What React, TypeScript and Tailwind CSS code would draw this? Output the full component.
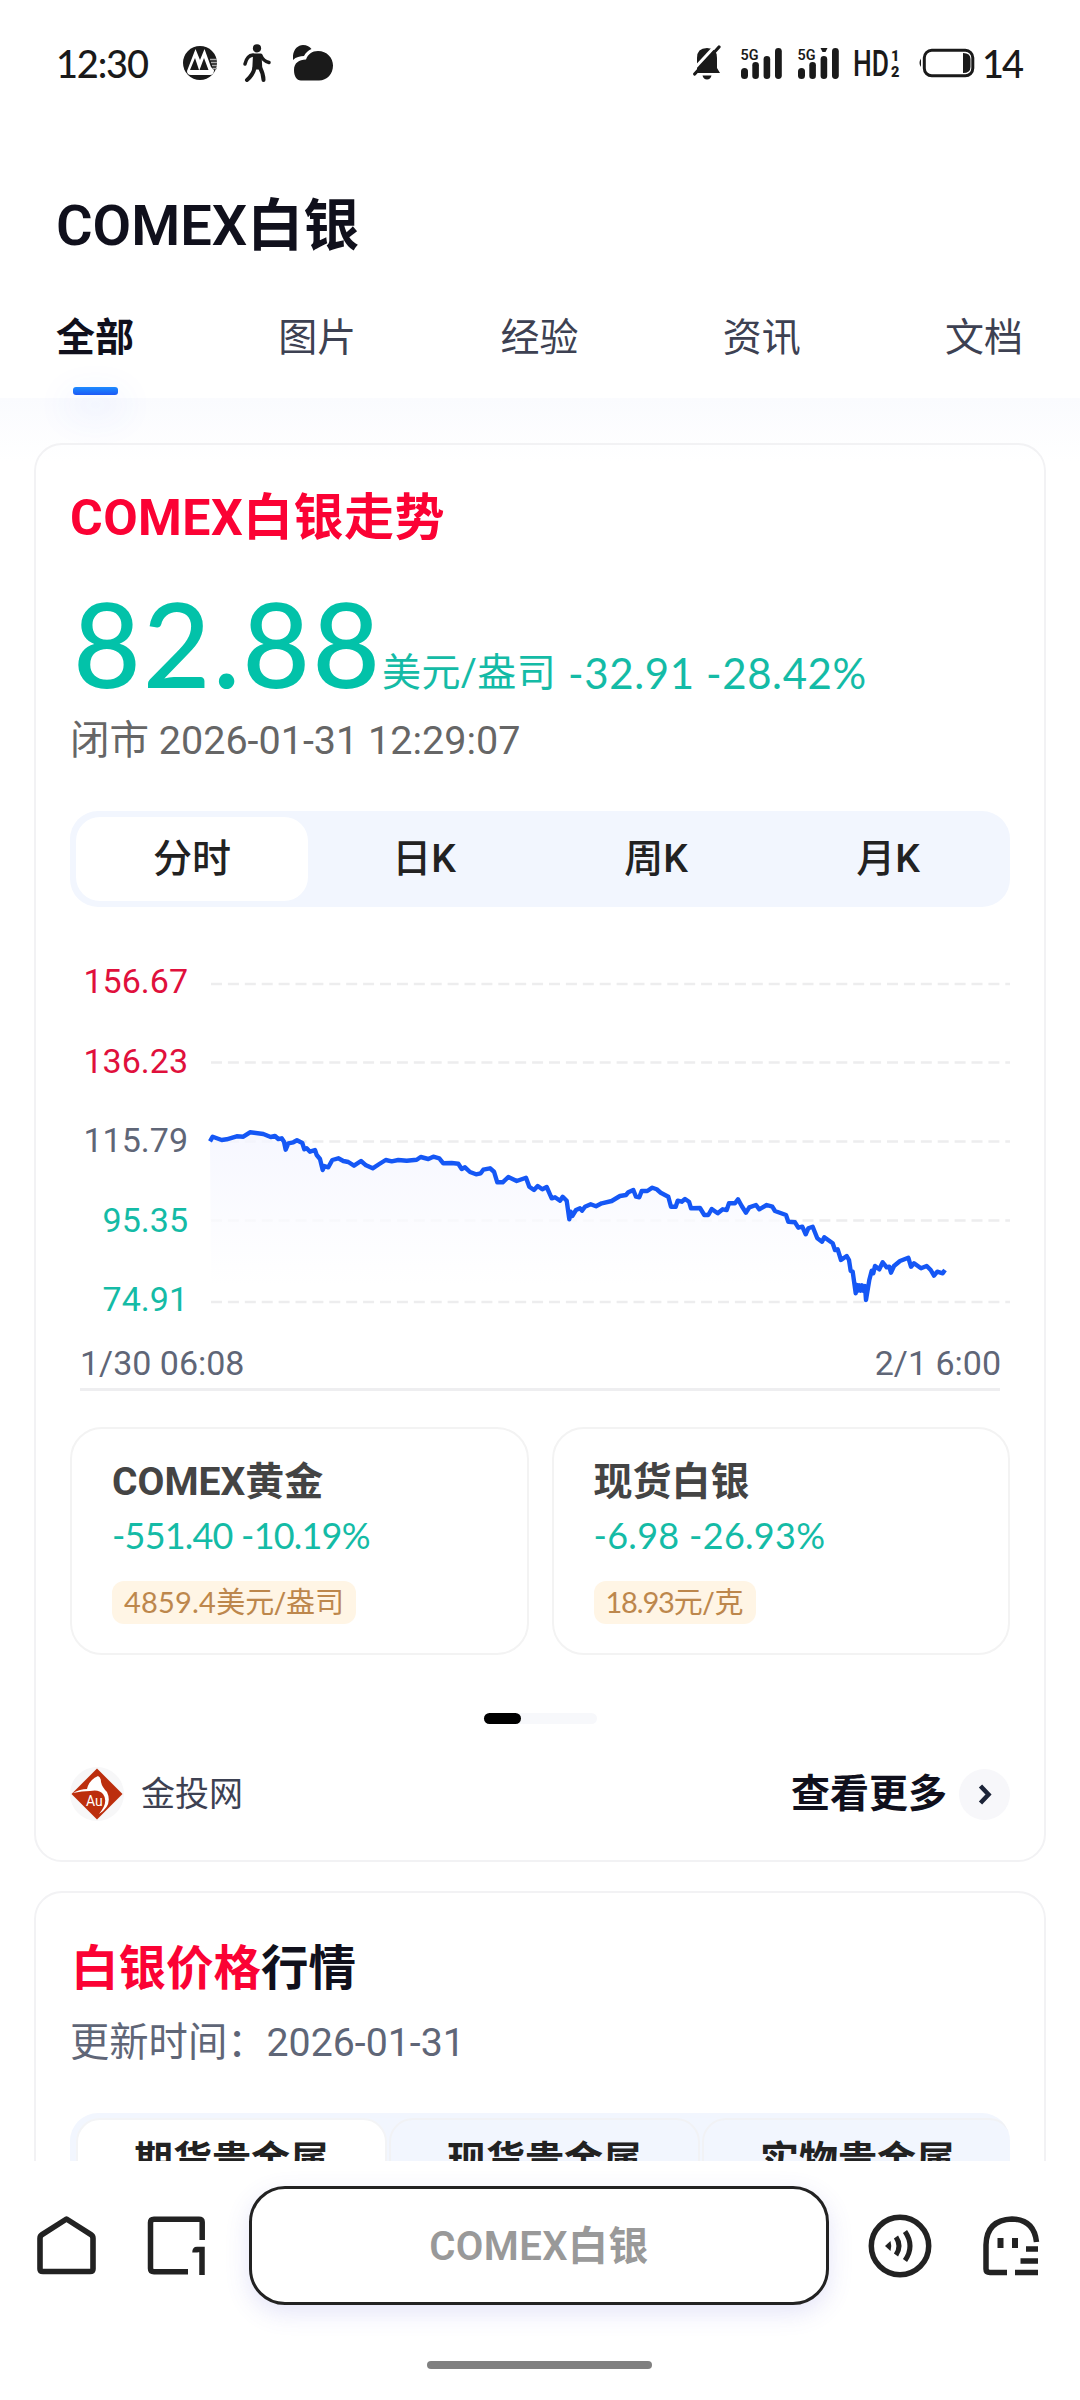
import { useState } from "react";

type Point = [number, number];

// price samples, first and second half of the session
const firstHalf: Point[] = [
  [450, 184], [458, 170], [485, 180], [500, 178], [530, 169], [550, 170], [570, 157], [610, 162],
  [632, 171], [645, 168], [655, 177], [665, 175], [672, 185], [677, 209], [685, 190], [700, 187],
  [711, 181], [727, 189], [733, 208], [740, 205], [750, 215], [765, 210], [770, 225], [780, 237],
  [788, 270], [793, 258], [805, 262], [817, 240], [835, 235], [850, 243], [865, 246], [882, 257],
  [903, 243], [918, 256], [938, 265], [958, 252], [977, 240], [995, 244], [1015, 240], [1040, 242],
  [1070, 239], [1082, 231], [1105, 237], [1120, 230], [1138, 235], [1150, 250], [1175, 249],
  [1195, 251], [1205, 267], [1215, 262], [1230, 276], [1248, 283], [1262, 280], [1270, 269],
  [1290, 265], [1302, 275], [1312, 307], [1328, 307], [1345, 291], [1370, 303], [1398, 293],
  [1408, 320], [1422, 330], [1433, 318], [1447, 328],
];
const secondHalf: Point[] = [
  [20, 321], [35, 355], [45, 352], [60, 362], [68, 350], [80, 362], [88, 418], [92, 395], [97, 408],
  [108, 390], [120, 385], [126, 392], [135, 380], [152, 373], [168, 379], [185, 370], [215, 363],
  [240, 348], [258, 345], [265, 337], [280, 330], [288, 350], [298, 352], [305, 333], [322, 333],
  [337, 323], [350, 328], [362, 338], [385, 350], [393, 380], [407, 380], [413, 362], [425, 365],
  [435, 357], [447, 365], [453, 385], [480, 384], [493, 405], [505, 405], [515, 387], [533, 400],
  [548, 388], [560, 390], [567, 370], [585, 370], [594, 358], [605, 378], [618, 398], [628, 382],
  [648, 375], [658, 388], [680, 375], [697, 380], [705, 393], [738, 405], [745, 425], [765, 427],
  [775, 443], [787, 440], [797, 463], [805, 445], [818, 440], [832, 475], [846, 485], [853, 472],
  [878, 490], [885, 510], [893, 508], [903, 540], [920, 528], [927, 540], [932, 573], [938, 575],
  [947, 640], [950, 615], [954, 632], [958, 616], [962, 632], [966, 616], [970, 632], [975, 618],
  [978, 660], [988, 600], [995, 572], [1000, 580], [1005, 558], [1018, 568], [1028, 547],
  [1040, 562], [1048, 560], [1053, 578], [1062, 558], [1080, 543], [1105, 533], [1113, 560],
  [1122, 550], [1143, 565], [1160, 558], [1172, 570], [1182, 587], [1192, 575], [1208, 580],
  [1215, 570],
];
const line = [...firstHalf, ...secondHalf.map(([x, y]) => [x + 1440, y])]
  .map(([x, y]) => `${((x - 453) / 3).toFixed(1)},${((y + 300) / 3).toFixed(1)}`)
  .join(" ");

const gridLines = [4, 82.5, 161.5, 240.5, 322];

const levels = [
  { value: "156.67", color: "text-[#e0103c]" },
  { value: "136.23", color: "text-[#e0103c]" },
  { value: "115.79", color: "text-[#5f6677]" },
  { value: "95.35", color: "text-[#14bba6]" },
  { value: "74.91", color: "text-[#14bba6]" },
];

const related = [
  {
    name: "COMEX黄金",
    change: "-551.40 -10.19%",
    price: "4859.4",
    unit: "美元/盎司",
    changeClass: "tracking-[-0.8px]",
    priceClass: "tracking-[0.2px]",
  },
  {
    name: "现货白银",
    change: "-6.98 -26.93%",
    price: "18.93",
    unit: "元/克",
    changeClass: "tracking-[0.3px]",
    priceClass: "tracking-[-1.2px]",
  },
];

const SignalIcon = ({ roaming = false }: { roaming?: boolean }) => (
  <svg className="overflow-visible" width="41" height="31" viewBox="0 0 41 31" fill="#1a1a1a">
    <text x="-0.5" y="11.5" fontSize="15" fontWeight="600" fontFamily="Roboto" textLength="18" lengthAdjust="spacingAndGlyphs">
      5G
    </text>
    <rect x="0" y="20" width="7" height="11" rx="3.5" />
    <rect x="11.3" y="14" width="6.6" height="17" rx="3.3" />
    <rect x="22.6" y="8" width="6.6" height="23" rx="3.3" />
    {roaming && <path d="M22.5 0h7l-2 4h-3z" />}
    <rect x="34" y="0" width="6.8" height="31" rx="3.4" />
  </svg>
);

const StatusBar = () => (
  <div className="flex h-[126px] items-center pl-[56px] pr-[58px] text-[#1a1a1a]">
    <span className="w-[127px] font-['Lato',sans-serif] text-[38px] leading-none font-medium tracking-[-1.2px]">12:30</span>
    <svg width="34" height="34" viewBox="0 0 34 34">
      <circle cx="17" cy="17" r="17" fill="#1a1a1a" />
      <path d="M12.5 3 L4 25 Q4 29 8 29 H27 Q31 29 31 24 L28 21 L21.5 3 L17 14Z" fill="#fff" />
      <path d="M7 24 L12 12 L16 24Z M16.5 24 L21 12 L25.5 24Z" fill="#1a1a1a" />
      <path d="M27 13.5h7M28 16.5h6M29 19.5h5M29.5 22.5h4.5" stroke="#aaa" strokeWidth="1.6" />
    </svg>
    <svg className="ml-[26px]" width="28" height="38" viewBox="0 0 28 38" fill="none" stroke="#1a1a1a" strokeLinecap="round" strokeLinejoin="round">
      <circle cx="14" cy="4.3" r="4.1" fill="#1a1a1a" stroke="none" />
      <path d="M11 10.500h6.500l.8 14h-8z" fill="#1a1a1a" strokeWidth="2" />
      <path d="M10 11 Q4 11.5 2 20 M18 11.5 Q20 17 26 18.5" strokeWidth="3.4" />
      <path d="M11.500 24 Q10 31 4 36 M17 23.5 Q20.5 30 20.5 36" strokeWidth="4" />
    </svg>
    <svg className="ml-[22px]" width="41" height="36" viewBox="0 0 41 36" fill="#1a1a1a">
      <path d="M0 15 C-1 6 4 0 10 0 C14 0 17 2 18.500 4 C15 5.500 12.500 8 11 11 C7 11 3 12 0 15Z" />
      <path d="M8 35.500 C3.500 35.500 1 31 1 25 C1 18 6 14.500 13 14.500 C15 9 19 6 25 6 C34 6 40 13 40 20.500 C40 29 34 35.500 26 35.500Z" />
    </svg>
    <div className="ml-auto flex items-center">
      <svg width="28" height="36" viewBox="0 0 28 36">
        <path d="M4 27 V13 Q4 3 14 3 Q24 3 24 13 V23 L27 28 H2Z" fill="#1a1a1a" />
        <path d="M-1 26 L24.500 -1.500" stroke="#fff" strokeWidth="3" />
        <path d="M1.700 29 L26 2" stroke="#1a1a1a" strokeWidth="3.200" strokeLinecap="round" />
        <path d="M9.500 30.500h9q-1 4-4.500 4t-4.500-4z" fill="#1a1a1a" />
      </svg>
      <div className="ml-5 flex gap-4">
        <SignalIcon />
        <SignalIcon roaming />
      </div>
      <svg className="ml-4 overflow-visible" width="46" height="30" viewBox="0 0 46 30" fill="#1a1a1a" fontFamily="Roboto" fontWeight="500">
        <text x="-2" y="28" fontSize="37" textLength="36" lengthAdjust="spacingAndGlyphs">HD</text>
        <text x="36" y="12.500" fontSize="14.500" fontWeight="900">1</text>
        <text x="36" y="29" fontSize="14.500" fontWeight="900">2</text>
      </svg>
      <svg className="ml-[17px]" width="57" height="30" viewBox="0 0 57 30">
        <path d="M3 10.500 Q0 15 3 19Z" fill="#1a1a1a" />
        <rect x="6.300" y="2.300" width="48.500" height="25.500" rx="7.500" fill="none" stroke="#1a1a1a" strokeWidth="3" />
        <path d="M45 5 Q52.500 5 52.500 11 V19 Q52.500 25 45 25Z" fill="#1a1a1a" />
      </svg>
      <span className="ml-[7px] font-['Lato',sans-serif] text-[38px] leading-none font-medium tracking-[-2px]">14</span>
    </div>
  </div>
);

const PriceChart = () => (
  <div className="mt-[54px]">
    <div className="flex">
      <div className="flex h-[358px] w-[118px] flex-col justify-between text-right text-[34px] leading-[40px]">
        {levels.map((level) => (
          <span key={level.value} className={level.color}>
            {level.value}
          </span>
        ))}
      </div>
      <svg className="ml-[23px] mt-[19px] overflow-visible" width="799" height="330" viewBox="0 0 799 330">
        <defs>
          <linearGradient id="area" x1="0" y1="150" x2="0" y2="305" gradientUnits="userSpaceOnUse">
            <stop offset="0" stopColor="#f4f5ff" stopOpacity="0.8" />
            <stop offset="1" stopColor="#ffffff" stopOpacity="0.8" />
          </linearGradient>
        </defs>
        {gridLines.map((y) => (
          <line key={y} x1="0" x2="799" y1={y} y2={y} stroke="#ededee" strokeWidth="2.5" strokeDasharray="11 5.9" />
        ))}
        <polygon points={`0,305 ${line} 738,305`} fill="url(#area)" />
        <polyline points={line} fill="none" stroke="#1557f5" strokeWidth="4.400" strokeLinejoin="round" />
      </svg>
    </div>
    <div className="mx-2.5 -mt-0.5 mb-9 flex h-[74px] items-end justify-between border-b-[3px] border-[#eeeef0] pb-[5px] text-[34px] leading-[40px] text-[#5f6677]">
      <span>1/30 06:08</span>
      <span className="-mr-px">2/1 6:00</span>
    </div>
  </div>
);

const BottomBar = () => (
  <div className="relative flex h-[239px] flex-col items-center bg-white pt-[25px]">
    <div className="flex w-full items-center pl-[37px]">
      <svg width="59" height="59" viewBox="0 0 59 59" fill="none" stroke="#222" strokeWidth="5.600" strokeLinejoin="round">
        <path d="M3 22.500 Q3 20 5 18.700 L29.500 3 L54 18.700 Q56 20 56 22.500 V53 Q56 55.500 53 55.500 H6 Q3 55.500 3 53Z" />
      </svg>
      <svg className="ml-[51px]" width="59" height="59" viewBox="0 0 59 59" fill="none" stroke="#222" strokeWidth="5.500">
        <path d="M55.200 24 V6 Q55.200 3.200 52 3.200 H7 Q3.500 3.200 3.500 6.500 V52.500 Q3.500 55.700 7 55.700 H41" />
        <path d="M55 59 V33.500 H50 Q48 33.500 48 36.500" />
      </svg>
      <div className="ml-[43px] flex h-[119px] w-[580px] items-center justify-center rounded-[36px] border-[3px] border-[#222] bg-white pt-0.5 text-[40px] font-semibold tracking-[0.4px] text-[#999] shadow-[0_8px_24px_rgba(90,90,210,0.16)]">
        COMEX白银
      </div>
      <svg className="ml-[39px]" width="64" height="64" viewBox="0 0 64 64" fill="none" stroke="#222" strokeWidth="5.500">
        <circle cx="32" cy="32" r="28.700" />
        <path d="M17 32 L22.500 27 Q24 32 22.500 37Z" fill="#222" stroke="none" />
        <path d="M28 23 Q34 32 28 41" strokeWidth="5" />
        <path d="M37 17.500 Q47 32 37 46.500" strokeWidth="5" />
      </svg>
      <svg className="ml-[51px]" width="57" height="60" viewBox="0 0 57 60" fill="none" stroke="#222" strokeWidth="5.500">
        <path d="M53.500 26 Q51 3.500 29 3 Q3.500 4 3 29 V53 Q3 56.500 7 56.500 H24" />
        <path d="M17.500 22v10M32 22v10" strokeWidth="6" />
        <path d="M43 33h12M37.500 45h17.500M32 56.500h23" />
      </svg>
    </div>
    <div className="mt-14 mr-px h-2 w-[225px] rounded-full bg-[#808080]" />
  </div>
);

const App = () => {
  const [tab, setTab] = useState("全部");
  const [period, setPeriod] = useState("分时");
  const [metal, setMetal] = useState("期货贵金属");

  return (
    <div className="flex h-[2400px] w-[1080px] flex-col overflow-hidden bg-white font-['Roboto','Noto_Sans_CJK_SC',sans-serif]">
      <StatusBar />

      <header className="relative z-10 h-[272px] shrink-0 bg-white px-[57px]">
        <h1 className="-ml-px pt-[62px] text-[56px] leading-[76px] font-semibold text-[#10101c]">COMEX白银</h1>
        <nav className="-ml-px mt-[44px] flex justify-between text-[39px] leading-[60px] text-[#3d4152]">
          {["全部", "图片", "经验", "资讯", "文档"].map((name) => (
            <button
              key={name}
              onClick={() => setTab(name)}
              className={name === tab ? "relative font-bold text-[#10101c]" : "relative"}
            >
              {name}
              {name === tab && (
                <span className="absolute left-[17px] top-[79px] h-2 w-[45px] rounded-[3px] bg-linear-to-b from-[#1e8bff] to-[#1f58f5] shadow-[0_14px_36px_8px_rgba(60,100,255,0.07)]" />
              )}
            </button>
          ))}
        </nav>
      </header>

      <main className="h-[1763px] shrink-0 overflow-hidden bg-linear-to-b from-[#fafbfe] to-white to-[64px] px-[34px] pt-[45px]">
        <section className="h-[1419px] rounded-[28px] border-2 border-[#f2f2f4] px-[34px] pt-[38px]">
          <h2 className="text-[50px] leading-[70px] font-bold tracking-[0.45px] text-[#fb0234]">COMEX白银走势</h2>

          <div className="mt-[32px] flex h-[114px] items-end whitespace-nowrap text-[#02c2a9]">
            <span className="w-[312px] pl-[3px] font-['Lato',sans-serif] text-[117px] leading-[112px] font-medium tracking-[2px]">82.88</span>
            <span className="text-[39px] leading-[52px] tracking-[0.4px] text-[#14bba6]">美元/盎司</span>
            <span className="ml-3 font-['Lato',sans-serif] text-[42px] leading-[52px] tracking-[0.6px] text-[#14bba6]">-32.91 -28.42%</span>
          </div>
          <p className="mt-[12px] text-[39.500px] leading-[60px] text-[#666]">闭市 2026-01-31 12:29:07</p>

          <div className="mt-[40px] flex h-24 rounded-[28px] bg-[#f2f6fe] p-1.5 text-[39px] font-medium text-[#222]">
            {["分时", "日K", "周K", "月K"].map((name) => (
              <button
                key={name}
                onClick={() => setPeriod(name)}
                className={name === period ? "flex-1 rounded-[24px] bg-white" : "flex-1"}
              >
                {name}
              </button>
            ))}
          </div>

          <PriceChart />

          <div className="flex gap-[23px]">
            {related.map((item) => (
              <div key={item.name} className="flex h-[228px] flex-1 flex-col items-start rounded-[32px] border-2 border-[#f3f3f3] pl-10 pt-[23px]">
                <h3 className="text-[39px] leading-[60px] font-bold text-[#444]">{item.name}</h3>
                <p className={`-mt-px font-['Lato',sans-serif] text-[36px] leading-[48px] text-[#14bba6] ${item.changeClass}`}>
                  {item.change}
                </p>
                <span className="mt-[22px] rounded-[12px] bg-[#fff5e5] px-3 text-[29px] leading-[41px] text-[#bd874c]">
                  <span className={`font-['Lato',sans-serif] ${item.priceClass}`}>{item.price}</span>
                  {item.unit}
                </span>
              </div>
            ))}
          </div>

          <div className="mx-auto mt-[58px] h-[11px] w-[113px] rounded-full bg-[#f7f8fb]">
            <div className="h-full w-[37px] rounded-full bg-black" />
          </div>

          <div className="mt-[43px] flex h-[54px] items-center">
            <svg width="54" height="54" viewBox="0 0 54 54">
              <circle cx="27" cy="27" r="27" fill="#f7f7f8" />
              <path d="M27 1.500 L52.500 27 L27 52.500 L1.500 27Z" fill="#bc2e0d" />
              <path d="M3 26 Q10 22 17 22 Q19 13 28 9 Q31 10 31 15 Q32 20 37 25 Q43 38 29 47 Q39 35 33 27 Q29 22 20 24 Q12 24 3 26Z" fill="#fff" />
              <text x="16" y="39" fontSize="14" fontFamily="Roboto" fill="#fff">Au</text>
            </svg>
            <span className="ml-[17px] text-[34px] text-[#3d4152]">金投网</span>
            <span className="ml-auto text-[39px] font-bold text-[#10101c]">查看更多</span>
            <svg className="ml-3" width="51" height="51" viewBox="0 0 51 51" fill="none">
              <circle cx="25.500" cy="25.500" r="25.500" fill="#f7f7fa" />
              <path d="M21.500 17 L29.500 25.500 L21.500 34" stroke="#1c2438" strokeWidth="4.500" />
            </svg>
          </div>
        </section>

        <section className="mt-[29px] h-[500px] rounded-[28px] border-2 border-[#f2f2f4] px-[34px] pt-[42px]">
          <h2 className="pl-px text-[47.500px] leading-[68px] font-bold text-[#10101c]">
            <span className="text-[#fb0234]">白银价格</span>行情
          </h2>
          <p className="mt-[10px] text-[39.300px] leading-[60px] text-[#5f6677]">更新时间：2026-01-31</p>
          <div className="mt-[40px] flex h-24 gap-0.5 overflow-hidden rounded-[28px] bg-[#f2f6fe] py-[5px] pl-[6px] text-[39px] font-semibold text-[#222]">
            {["期货贵金属", "现货贵金属", "实物贵金属"].map((name) => (
              <button
                key={name}
                onClick={() => setMetal(name)}
                className={
                  name === metal
                    ? "w-[311px] shrink-0 rounded-[24px] border-2 border-[#f3f4f6] bg-white"
                    : "w-[311px] shrink-0 rounded-[24px] border-2 border-[#f1f2f5]"
                }
              >
                {name}
              </button>
            ))}
          </div>
        </section>
      </main>

      <BottomBar />
    </div>
  );
};

export default App;
